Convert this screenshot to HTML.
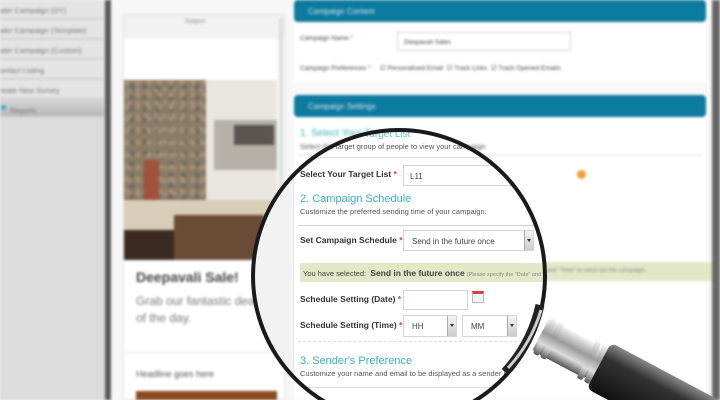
<!DOCTYPE html>
<html><head><meta charset="utf-8"><style>
*{margin:0;padding:0;box-sizing:border-box}
html,body{width:720px;height:400px;overflow:hidden}
body{position:relative;background:#f4f4f4;font-family:"Liberation Sans",sans-serif}
#wrap{position:absolute;left:0;top:0;width:720px;height:400px;overflow:hidden;contain:paint}
.abs{position:absolute}
#bg{position:absolute;left:0;top:0;width:720px;height:400px;filter:blur(1.3px);overflow:hidden}
.side div{position:absolute;left:0;width:104px;height:19px;background:#e4e4e4;border-bottom:1px solid #c8c8c8;font-size:7.5px;color:#777;padding:6px 0 0 0}
.t{position:absolute;white-space:nowrap}
.bar{position:absolute;left:294px;width:412px;height:22px;background:#0d7aa0;border-radius:4px;color:#cfe8f2;font-size:8px;padding:7px 0 0 14px}
.teal{color:#3ab0c0}
.lbl{font-size:8.5px;font-weight:bold;color:#333}
.inp{position:absolute;background:#fff;border:1px solid #d4d4d4;font-size:8px;color:#444;padding:6px 0 0 6px}
.selb{position:absolute;width:9px;border-left:1px solid #aaa;background:linear-gradient(#f4f4f4,#ccc);top:0;bottom:0;right:0}
.selb:after{content:"";position:absolute;left:2px;top:8px;border:2px solid transparent;border-top:3px solid #333}
.hr{position:absolute;height:1px;background:#ddd}
.sub{font-size:7.5px;color:#555}
#lens{position:absolute;left:0;top:0;width:720px;height:400px;clip-path:circle(146px at 399px 276px);background:#fff;overflow:hidden}
.stone{background-color:#8a7c66;background-image:radial-gradient(circle at 3px 3px,#a89070 2px,transparent 3px),radial-gradient(circle at 8px 7px,#6e6a62 2px,transparent 3px),radial-gradient(circle at 5px 10px,#9c8f7c 2px,transparent 3px);background-size:11px 12px,13px 11px,9px 13px}
</style></head><body>
<div id="wrap">
<div id="bg">
  <div class="abs side" style="left:0;top:0;width:105px;height:400px;background:#dcdcdc">
    <div style="top:0">aler Campaign (DY)</div>
    <div style="top:20px">aler Campaign (Template)</div>
    <div style="top:40px">aler Campaign (Custom)</div>
    <div style="top:60px">ontact Listing</div>
    <div style="top:80px">reate New Survey</div>
    <div style="top:100px;background:linear-gradient(#d4d4d4,#b8b8b8);height:17px;padding-left:10px">Reports</div>
  </div>
  <div class="abs" style="left:1px;top:105px;width:5px;height:5px;border-radius:50%;background:#3aa8c8"></div>
  <div class="abs" style="left:105px;top:0;width:6px;height:400px;background:#5a5a5a"></div>
  <div class="abs" style="left:111px;top:0;width:180px;height:400px;background:#f6f6f6"></div>
  <div class="abs" style="left:123px;top:14px;width:162px;height:386px;background:#fff;border:1px solid #e2e2e2"></div>
  <div class="abs" style="left:124px;top:15px;width:160px;height:24px;background:#f2f2f2"></div>
  <div class="t" style="left:185px;top:19px;font-size:6px;color:#888">Subject</div>
  <div class="abs" style="left:279px;top:18px;width:4px;height:180px;background:#ddd"></div>
  <div class="abs" style="left:124px;top:80px;width:153px;height:180px;background:#e9e6e0;overflow:hidden">
    <div class="abs stone" style="left:0;top:0;width:82px;height:135px"></div>
    <div class="abs" style="left:90px;top:40px;width:63px;height:50px;background:#b5b0a8"></div>
    <div class="abs" style="left:110px;top:45px;width:40px;height:20px;background:#5b5550"></div>
    <div class="abs" style="left:0;top:120px;width:153px;height:30px;background:#d8cdb6"></div>
    <div class="abs" style="left:0;top:150px;width:153px;height:30px;background:#3a2a20"></div>
    <div class="abs" style="left:50px;top:135px;width:90px;height:45px;background:#6a4c36"></div>
    <div class="abs" style="left:20px;top:80px;width:15px;height:40px;background:#a0533a"></div>
  </div>
  <div class="t" style="left:136px;top:269px;font-size:14px;font-weight:bold;color:#444">Deepavali Sale!</div>
  <div class="t" style="left:136px;top:293px;font-size:12px;color:#777;line-height:17px">Grab our fantastic dea<br>of the day.</div>
  <div class="abs" style="left:124px;top:352px;width:155px;height:1px;background:#e4e4e4"></div>
  <div class="t" style="left:136px;top:369px;font-size:9px;color:#555">Headline goes here</div>
  <div class="abs" style="left:136px;top:391px;width:141px;height:9px;background:#8a4a20"></div>
  <div class="abs" style="left:291px;top:0;width:421px;height:400px;background:#f8f8f8"></div>
  <div class="bar" style="top:0">Campaign Content</div>
  <div class="abs" style="left:294px;top:22px;width:412px;height:60px;background:#fff"></div>
  <div class="t" style="left:300px;top:35px;font-size:6.5px;color:#444">Campaign Name <span style="color:red">*</span></div>
  <div class="inp" style="left:397px;top:32px;width:174px;height:19px;font-size:6.5px">Deepavali Sales</div>
  <div class="t" style="left:300px;top:64px;font-size:6.5px;color:#444">Campaign Preferences <span style="color:red">*</span> &nbsp; &nbsp; ☑ Personalised Email &nbsp;☑ Track Links &nbsp;☑ Track Opened Emails</div>
  <div class="bar" style="top:95px">Campaign Settings</div>
  <div class="abs" style="left:294px;top:117px;width:412px;height:283px;background:#fff"></div>
  <div class="t teal" style="left:300px;top:128px;font-size:10px">1. Select Your Target List</div>
  <div class="t sub" style="left:300px;top:142px">Select the target group of people to view your campaign</div>
  <div class="abs" style="left:300px;top:262px;width:412px;height:19px;background:#dfe9c6"></div>
  <div class="t" style="left:530px;top:268px;font-size:6px;color:#888">Date" and "Time" to send out the campaign.</div>
  <div class="abs" style="left:298px;top:155px;width:404px;height:1px;background:#e2e2e2"></div>
  <div class="abs" style="left:712px;top:0;width:8px;height:400px;background:#666"></div>
  <div class="abs" style="left:577px;top:170px;width:9px;height:9px;border-radius:50%;background:#f0a030"></div>
</div>

<div id="lens">
    <div class="abs" style="left:250px;top:130px;width:40px;height:270px;background:#f2f2f2"></div>
    <div class="abs" style="left:290px;top:130px;width:4px;height:270px;background:#f5f5f5;border-right:1px solid #e6e6e6"></div>
    <div class="t teal" style="left:300px;top:129px;font-size:10px;opacity:.8">1. Select Your Target List</div>
    <div class="t sub" style="left:300px;top:142px">Select the target group of people to view your campaign</div>
    <div class="hr" style="left:298px;top:157px;width:300px"></div>
    <div class="t lbl" style="left:300px;top:169px">Select Your Target List <span style="color:#d33">*</span></div>
    <div class="t" style="left:399px;top:169px;font-size:8px;color:#aaa">:</div>
    <div class="inp" style="left:403px;top:165px;width:175px;height:21px">L11</div>
    <div class="t teal" style="left:300px;top:193px;font-size:11px">2. Campaign Schedule</div>
    <div class="t sub" style="left:300px;top:207px">Customize the preferred sending time of your campaign.</div>
    <div class="hr" style="left:298px;top:225px;width:300px;background:#d0d0d0"></div>
    <div class="t lbl" style="left:300px;top:235px">Set Campaign Schedule <span style="color:#d33">*</span></div>
    <div class="t" style="left:399px;top:235px;font-size:8px;color:#aaa">:</div>
    <div class="inp" style="left:403px;top:230px;width:131px;height:21px;padding-left:8px">Send in the future once<div class="selb"></div></div>
    <div class="abs" style="left:300px;top:263px;width:300px;height:19px;background:#dfe9c6"></div>
    <div class="t" style="left:303px;top:268px;font-size:7.5px;color:#444">You have selected: &nbsp;<b style="font-size:8.5px">Send in the future once</b> <span style="font-size:5.5px;color:#888">(Please specify the "Date" and "Time" to send out the campaign.</span></div>
    <div class="t lbl" style="left:300px;top:294px">Schedule Setting (Date) <span style="color:#d33">*</span></div>
    <div class="t" style="left:399px;top:294px;font-size:8px;color:#aaa">:</div>
    <div class="inp" style="left:403px;top:290px;width:65px;height:20px"></div>
    <div class="abs" style="left:472px;top:291px;width:12px;height:12px;border:1px solid #bbb;border-top:3px solid #d94040;background:#f2f2f2"></div>
    <div class="t lbl" style="left:300px;top:320px">Schedule Setting (Time) <span style="color:#d33">*</span></div>
    <div class="t" style="left:399px;top:320px;font-size:8px;color:#aaa">:</div>
    <div class="inp" style="left:403px;top:315px;width:54px;height:22px;padding-left:8px">HH<div class="selb"></div></div>
    <div class="inp" style="left:462px;top:315px;width:55px;height:22px;padding-left:8px">MM<div class="selb"></div></div>
    <div class="abs" style="left:298px;top:341px;width:300px;border-top:1px dashed #ddd"></div>
    <div class="t teal" style="left:300px;top:355px;font-size:11px">3. Sender's Preference</div>
    <div class="t sub" style="left:300px;top:369px">Customize your name and email to be displayed as a sender in the email.</div>
    <div class="hr" style="left:298px;top:387px;width:300px"></div>
</div>
<svg class="abs" style="left:0;top:0;display:block" width="720" height="400">
  <defs>
    <linearGradient id="sv" x1="0" y1="0" x2="0" y2="1"><stop offset="0" stop-color="#f4f4f4"/><stop offset=".4" stop-color="#9a9a9a"/><stop offset=".7" stop-color="#dcdcdc"/><stop offset="1" stop-color="#555"/></linearGradient>
    <linearGradient id="bk" x1="0" y1="0" x2="0" y2="1"><stop offset="0" stop-color="#888"/><stop offset=".3" stop-color="#333"/><stop offset="1" stop-color="#111"/></linearGradient>
  </defs>
  <circle cx="399" cy="276" r="146" fill="none" stroke="#1a1a1a" stroke-width="4"/>
  <path d="M540 305 A146 146 0 0 1 505 372" fill="none" stroke="#222" stroke-width="9"/>
  <path d="M541 310 A146 146 0 0 1 508 368" fill="none" stroke="#cfcfcf" stroke-width="3"/>
  <g transform="translate(560 345) rotate(28)">
    <rect x="-22" y="-18" width="60" height="36" fill="url(#sv)" rx="3"/>
    <rect x="-20" y="-20" width="6" height="40" fill="url(#sv)" rx="2"/>
    <rect x="-12" y="-20" width="6" height="40" fill="url(#sv)" rx="2"/>
    <rect x="30" y="-21" width="6" height="42" fill="url(#sv)" rx="2"/>
    <rect x="38" y="-21" width="6" height="42" fill="url(#sv)" rx="2"/>
    <rect x="44" y="-26" width="150" height="52" fill="url(#bk)" rx="6"/>
  </g>
</svg>
</div>
</body></html>
